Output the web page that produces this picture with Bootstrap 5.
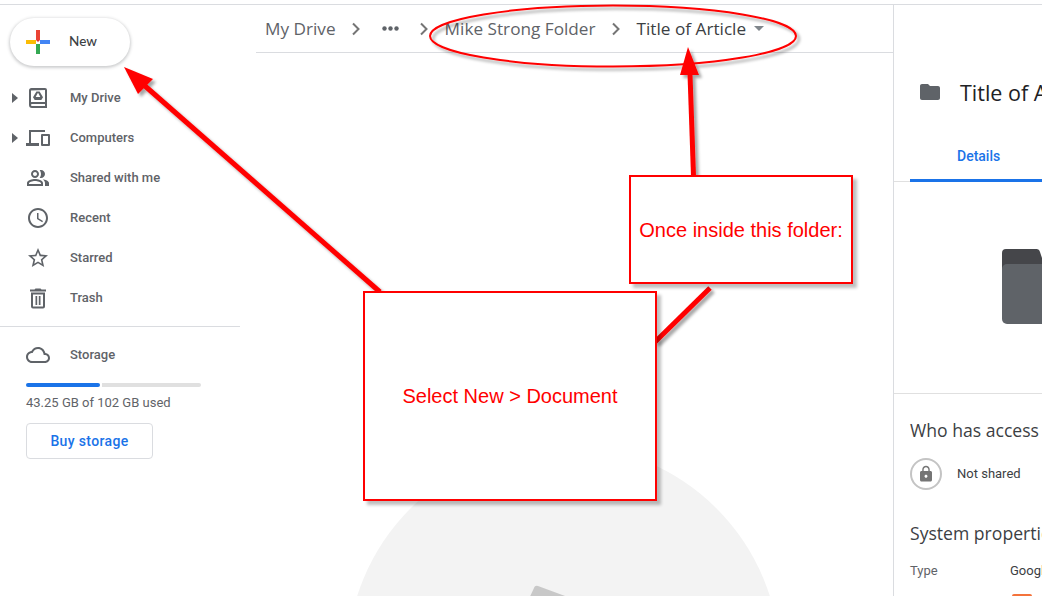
<!DOCTYPE html>
<html lang="en">
<head>
<meta charset="utf-8">
<title>Drive</title>
<link href="https://cdn.jsdelivr.net/npm/bootstrap@5.3.0/dist/css/bootstrap.min.css" rel="stylesheet">
<style>
html,body{height:596px;overflow:hidden;background:#fff}
body{font-family:Roboto,"Liberation Sans",sans-serif;color:#5f6368;position:relative}
.shell{height:592px;margin-top:4px;border-top:1px solid #dadce0}
.side{width:256px;flex:none}
.new-btn{width:120px;height:48px;margin:13px 0 0 10px;border-radius:24px;background:#fff;box-shadow:0 1px 3px 1px rgba(60,64,67,.25);padding:0 0 0 16px;font:500 13.5px Lato,Roboto,sans-serif;color:#3c4043;gap:19px;border:0;line-height:1}
.new-btn svg{flex:none}
.nav-col{margin-top:12px;width:240px}
.nav-row{height:40px;font-size:13px;font-weight:500;color:#5f6368;position:relative}
.caret-slot{width:26px;flex:none;padding-left:12px}
.icon-slot{width:24px;flex:none;margin-right:20px}
.rule{height:1px;background:#dadce0;width:240px;margin:8px 0 8px}
.store{height:40px;font-size:13px;font-weight:500;padding-left:26px;gap:20px}
.bar{margin:8px 0 0 26px;width:175px;height:4px;gap:2px}
.bar-a{width:74px;background:#1a73e8;border-radius:2px}
.bar-b{width:99px;background:#e0e0e0;border-radius:0 2px 2px 0}
.used{margin:9px 0 0 26px;font-size:13px;line-height:14px;color:#5f6368}
.buy{margin:13px 0 0 26px;width:127px;height:36px;border:1px solid #dadce0;border-radius:4px;color:#1a73e8;font-size:14px;letter-spacing:.35px;font-weight:500;padding:0;background:#fff;line-height:34px}
.main{min-width:0;overflow:hidden;position:relative}
.crumbs{height:48px;border-bottom:1px solid #dadce0;padding-left:9px;font:400 17.200px "Open Sans",sans-serif;color:#5f6368}
.crumbs .now{color:#3c4043}
.chev{flex:none;display:flex}
.chev-a{margin:0 21px 0 15px}
.chev-b{margin:0 16px 0 20px}
.chev-c{margin:0 16px 0 15px}
.disc{position:absolute;left:91px;top:440px;width:433px;height:433px;border-radius:50%;background:#f3f3f3}
.panel{width:149px;flex:none;border-left:1px solid #dadce0;overflow:hidden;white-space:nowrap;padding-top:48px}
.p-head{height:78px;padding:0 0 0 24px;gap:18px;font:400 21.500px "Open Sans",sans-serif;color:#202124}
.p-head svg{flex:none}
.p-tab{height:51px;position:relative;border-bottom:1px solid #e0e0e0}
.p-tab-t{position:absolute;left:63px;top:15px;font-size:14px;font-weight:500;color:#1a73e8}
.p-tab-u{position:absolute;left:16px;right:0;bottom:-1px;height:3px;background:#1a73e8}
.p-art{height:212px;border-bottom:1px solid #e0e0e0;padding:67px 0 0 108px}
.p-h{font:400 17.600px "Open Sans",sans-serif;color:#3c4043;padding-left:16px;line-height:22px}
.who{margin-top:25px}
.lock-row{margin:17px 0 0 16px;gap:15px;font-size:13px;color:#3c4043}
.lock-disc{width:32px;height:32px;border:2px solid #c4c4c4;border-radius:50%;flex:none}
.sys{margin-top:32px}
.kv{padding-left:16px;margin-top:17px;font-size:13px}
.kv-k{width:100px;flex:none;color:#5f6368}
.kv-v{color:#3c4043}
.drop{display:block;margin:13px 0 0 118px;width:20px;height:6px;background:#f4733b;border-radius:2px 2px 0 0}
.sheet{position:absolute;left:0;top:0;width:1042px;height:596px;pointer-events:none}
.note{position:absolute;background:#fff;border:2px solid #f00;box-shadow:4px 4px 3px rgba(0,0,0,.25);color:#f00;font-family:"Liberation Sans",sans-serif;font-size:20px}
.note-a{left:363px;top:291px;width:294px;height:210px}
.note-b{left:629px;top:175px;width:224px;height:109px}
</style>
</head>
<body>
<div class="shell d-flex">
  <aside class="side">
    <button class="new-btn btn d-flex align-items-center" type="button">
      <svg width="24" height="24" viewBox="0 0 24 24"><path fill="#ea4335" d="M10 0h4v10h-4z"/><path fill="#4285f4" d="M14 10h10v4H14z"/><path fill="#34a853" d="M10 14h4v10h-4z"/><path fill="#fbbc05" d="M0 10h10v4H0z"/><path fill="#d33" d="M10 10h4l-2 2z"/></svg>
      <span>New</span>
    </button>
    <nav class="nav flex-column nav-col">
      <div class="nav-row d-flex align-items-center"><span class="caret-slot d-flex"><svg width="6" height="10" viewBox="0 0 6 10"><path fill="#5f6368" d="M0 0l6 5-6 5z"/></svg></span><span class="icon-slot d-flex"><svg width="24" height="24" viewBox="0 0 24 24"><path fill="#5f6368" fill-rule="evenodd" d="M5.500 2H19a2 2 0 0 1 2 2v18H6a3 3 0 0 1-3-3V4.500A2.500 2.500 0 0 1 5.500 2zM5 4.500V16.300c.3-.2.6-.3 1-.3h13V4zM5 19a1 1 0 0 0 1 1h13v-2H6a1 1 0 0 0-1 1zM10.400 5.500h3.200l3.400 5.700-1.700 2.800H8.700L7 11.200zm1.200 1.800L9.700 11h4.600l-1.900-3.700z"/></svg></span>My Drive</div>
      <div class="nav-row d-flex align-items-center"><span class="caret-slot d-flex"><svg width="6" height="10" viewBox="0 0 6 10"><path fill="#5f6368" d="M0 0l6 5-6 5z"/></svg></span><span class="icon-slot d-flex"><svg width="24" height="24" viewBox="0 0 24 24"><path fill="#5f6368" d="M3 4h16v2H5v11h8v3H0v-3h3z"/><path fill="#5f6368" fill-rule="evenodd" d="M16 8h7a1 1 0 0 1 1 1v10a1 1 0 0 1-1 1h-7a1 1 0 0 1-1-1V9a1 1 0 0 1 1-1zm1 2v8h5v-8z"/></svg></span>Computers</div>
      <div class="nav-row d-flex align-items-center"><span class="caret-slot"></span><span class="icon-slot d-flex"><svg width="24" height="24" viewBox="0 0 24 24"><path fill="#5f6368" d="M16.670 13.130C18.040 14.060 19 15.320 19 17v3h4v-3c0-2.180-3.570-3.470-6.330-3.870z"/><path fill="#5f6368" d="M15 12c2.210 0 4-1.790 4-4s-1.790-4-4-4c-.47 0-.91.1-1.330.24C14.500 5.270 15 6.580 15 8s-.5 2.730-1.330 3.760c.42.14.86.24 1.330.24z"/><path fill="#5f6368" d="M9 12c2.210 0 4-1.790 4-4s-1.790-4-4-4-4 1.790-4 4 1.790 4 4 4zm0-6c1.100 0 2 .9 2 2s-.9 2-2 2-2-.9-2-2 .9-2 2-2z"/><path fill="#5f6368" d="M9 13c-2.670 0-8 1.340-8 4v3h16v-3c0-2.660-5.330-4-8-4zm6 5H3v-.99C3.200 16.290 6.300 15 9 15s5.800 1.290 6 2z"/></svg></span>Shared with me</div>
      <div class="nav-row d-flex align-items-center"><span class="caret-slot"></span><span class="icon-slot d-flex"><svg width="24" height="24" viewBox="0 0 24 24"><path fill="#5f6368" d="M11.990 2C6.470 2 2 6.480 2 12s4.470 10 9.990 10C17.520 22 22 17.520 22 12S17.520 2 11.990 2zM12 20c-4.420 0-8-3.580-8-8s3.580-8 8-8 8 3.580 8 8-3.580 8-8 8zm.5-13H11v6l5.250 3.150.75-1.230-4.500-2.670z"/></svg></span>Recent</div>
      <div class="nav-row d-flex align-items-center"><span class="caret-slot"></span><span class="icon-slot d-flex"><svg width="24" height="24" viewBox="0 0 24 24"><path fill="#5f6368" d="M22 9.240l-7.190-.62L12 2 9.190 8.630 2 9.240l5.460 4.730L5.820 21 12 17.270 18.180 21l-1.630-7.030L22 9.240zM12 15.400l-3.760 2.270 1-4.280-3.320-2.880 4.380-.38L12 6.100l1.710 4.040 4.380.38-3.320 2.880 1 4.280L12 15.400z"/></svg></span>Starred</div>
      <div class="nav-row d-flex align-items-center"><span class="caret-slot"></span><span class="icon-slot d-flex"><svg width="24" height="24" viewBox="0 0 24 24"><path fill="#5f6368" d="M5 6.500h14v14a2 2 0 0 1-2 2H7a2 2 0 0 1-2-2zm2 2v12h10v-12zM4 3.500h4.500l1-1h5l1 1H20v2H4zM9.500 10h1.700v9H9.500zM12.800 10h1.700v9h-1.700z" fill-rule="evenodd"/></svg></span>Trash</div>
    </nav>
    <div class="rule"></div>
    <div class="store d-flex align-items-center"><svg width="24" height="24" viewBox="0 0 24 24"><path fill="#5f6368" d="M19.350 10.040C18.670 6.590 15.640 4 12 4 9.110 4 6.600 5.640 5.350 8.040 2.340 8.360 0 10.910 0 14c0 3.310 2.690 6 6 6h13c2.760 0 5-2.240 5-5 0-2.640-2.050-4.780-4.650-4.960zM19 18H6c-2.210 0-4-1.790-4-4 0-2.050 1.530-3.760 3.560-3.970l1.070-.11.5-.95C8.080 7.140 9.940 6 12 6c2.620 0 4.880 1.860 5.390 4.430l.3 1.500 1.530.11c1.560.1 2.780 1.410 2.780 2.960 0 1.650-1.350 3-3 3z"/></svg><span>Storage</span></div>
    <div class="bar d-flex"><span class="bar-a"></span><span class="bar-b"></span></div>
    <div class="used">43.25 GB of 102 GB used</div>
    <button class="buy btn d-block" type="button">Buy storage</button>
  </aside>
  <main class="main flex-grow-1">
    <div class="crumbs d-flex align-items-center">
      <span>My Drive</span>
      <span class="chev chev-a"><svg width="10" height="14" viewBox="0 0 10 14"><path fill="none" stroke="#757575" stroke-width="2" d="M2 1.500L7.500 7 2 12.500"/></svg></span>
      <svg width="17" height="5" viewBox="0 0 17 5"><g fill="#5f6368"><circle cx="2.500" cy="2.500" r="2.200"/><circle cx="8.500" cy="2.500" r="2.200"/><circle cx="14.500" cy="2.500" r="2.200"/></g></svg>
      <span class="chev chev-b"><svg width="10" height="14" viewBox="0 0 10 14"><path fill="none" stroke="#757575" stroke-width="2" d="M2 1.500L7.500 7 2 12.500"/></svg></span>
      <span>Mike Strong Folder</span>
      <span class="chev chev-c"><svg width="10" height="14" viewBox="0 0 10 14"><path fill="none" stroke="#757575" stroke-width="2" d="M2 1.500L7.500 7 2 12.500"/></svg></span>
      <span class="now">Title of Article</span>
      <svg class="ms-2" width="10" height="5" viewBox="0 0 10 5"><path fill="#80868b" d="M0 0h10L5 5z"/></svg>
    </div>
    <div class="disc"></div>
    <svg class="position-absolute" style="left:268px;top:578px" width="60" height="20" viewBox="0 0 60 20"><path fill="#c8c8c8" d="M3 20L10 5a3 3 0 0 1 4-2l46 17z"/></svg>
  </main>
  <aside class="panel">
    <div class="p-head d-flex align-items-center"><svg width="24" height="24" viewBox="0 0 24 24"><path fill="#5f6368" d="M10 4H4c-1.100 0-1.990.9-1.990 2L2 18c0 1.100.9 2 2 2h16c1.100 0 2-.9 2-2V8c0-1.100-.9-2-2-2h-8l-2-2z"/></svg><span>Title of Article</span></div>
    <div class="p-tab"><span class="p-tab-t">Details</span><span class="p-tab-u"></span></div>
    <div class="p-art"><svg width="72" height="75" viewBox="0 0 72 75"><path fill="#45464a" d="M4 0h30a4 4 0 0 1 4 3l2 6h32v20H0V4a4 4 0 0 1 4-4z"/><path fill="#5f6368" d="M5 15h67v60H5a5 5 0 0 1-5-5V20a5 5 0 0 1 5-5z"/></svg></div>
    <div class="p-h who">Who has access</div>
    <div class="lock-row d-flex align-items-center"><span class="lock-disc d-flex align-items-center justify-content-center"><svg width="18" height="18" viewBox="0 0 24 24"><path fill="#757575" d="M18 8h-1V6c0-2.760-2.240-5-5-5S7 3.240 7 6v2H6c-1.100 0-2 .9-2 2v10c0 1.100.9 2 2 2h12c1.100 0 2-.9 2-2V10c0-1.100-.9-2-2-2zm-6 9c-1.100 0-2-.9-2-2s.9-2 2-2 2 .9 2 2-.9 2-2 2zm3.100-9H8.900V6c0-1.710 1.390-3.100 3.100-3.100 1.710 0 3.100 1.390 3.100 3.100v2z"/></svg></span><span>Not shared</span></div>
    <div class="p-h sys">System properties</div>
    <div class="kv d-flex"><span class="kv-k">Type</span><span class="kv-v">Google Drive Folder</span></div>
    <span class="drop"></span>
  </aside>
</div>
<svg class="sheet" viewBox="0 0 1042 596">
  <defs><filter id="sh" x="-10%" y="-10%" width="125%" height="125%"><feDropShadow dx="3" dy="3" stdDeviation="1.500" flood-color="#000" flood-opacity=".35"/></filter></defs>
  <g filter="url(#sh)">
    <ellipse cx="613" cy="36" rx="183" ry="30.500" fill="none" stroke="#f00" stroke-width="2"/>
    <path d="M380 292L145 86" stroke="#f00" stroke-width="5" fill="none"/>
    <path d="M124 67l29 12-15 15z" fill="#f00"/>
    <path d="M693.500 176L690 74" stroke="#f00" stroke-width="5" fill="none"/>
    <path d="M688 47l11 28h-19z" fill="#f00"/>
    <path d="M710 288L655 342" stroke="#f00" stroke-width="5" fill="none"/>
  </g>
</svg>
<div class="note note-a d-flex align-items-center justify-content-center">Select New &gt; Document</div>
<div class="note note-b d-flex align-items-center justify-content-center">Once inside this folder:</div>
<script src="https://cdn.jsdelivr.net/npm/bootstrap@5.3.0/dist/js/bootstrap.bundle.min.js"></script>
</body>
</html>
